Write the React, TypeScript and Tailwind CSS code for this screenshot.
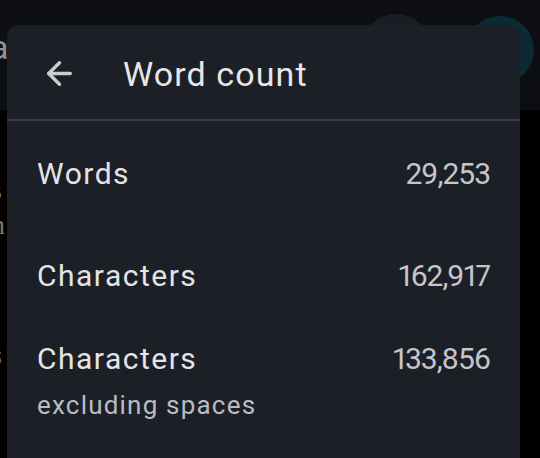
import { ArrowLeft } from "lucide-react";

const rows = [
  { label: "Words", value: "29,253", gap: "mt-[35px]" },
  { label: "Characters", value: "162,917", gap: "mt-[66px]" },
  { label: "Characters", value: "133,856", gap: "mt-[47px]", sub: "excluding spaces" },
];

export default function App() {
  return (
    <div
      className="relative w-[540px] h-[458px] overflow-hidden bg-black"
      style={{ fontFamily: "Roboto, 'Noto Sans', sans-serif" }}
    >
      {/* page behind the sheet */}
      <div className="absolute inset-x-0 top-0 h-[110px] bg-[#0c0e11]" />
      <div className="absolute left-[360px] top-[14px] w-[72px] h-[72px] rounded-full bg-[#1a1e24]" />
      <div className="absolute left-[466px] top-[16px] w-[68px] h-[68px] rounded-full bg-[#0c2a33]" />
      <span className="absolute left-[-10px] top-[30px] text-[34px] leading-none text-[#8e9196]">a</span>
      <span className="absolute left-[-9px] top-[176px] text-[28px] leading-none text-[#8a7458]" style={{ fontFamily: "'Liberation Serif', serif" }}>s</span>
      <span className="absolute left-[-9px] top-[211px] text-[28px] leading-none text-[#8a7458]" style={{ fontFamily: "'Liberation Serif', serif" }}>n</span>
      <span className="absolute left-[-13px] top-[340px] text-[30px] leading-none text-[#6d7075]">s</span>

      {/* word count sheet */}
      <div className="relative ml-[7px] mt-[25px] w-[513px] h-[433px] rounded-t-[12px] bg-[#1c1f26]">
        <div className="flex items-center h-[94px] pt-[3px] pl-[34px]">
          <ArrowLeft size={37} strokeWidth={2.2} className="text-[#c9ccd1]" />
          <span className="ml-[45px] text-[34px] leading-[40px] text-[#e6e6e9] tracking-[1.1px]">Word count</span>
        </div>
        <div className="h-[2px] bg-[#3c4046]" />
        <div className="px-[30px]">
          {rows.map((r, i) => (
            <div key={i} className={r.gap}>
              <div className="flex justify-between items-start">
                <span className="text-[30px] leading-[36px] text-[#e3e4e7] tracking-[1.5px]">{r.label}</span>
                <span className="text-[30px] leading-[36px] text-[#c3c6cc] tracking-[-1px] proportional-nums">{r.value}</span>
              </div>
              {r.sub && (
                <div className="mt-[12px] text-[26px] leading-[32px] text-[#b9bcc2] tracking-[1.2px]">{r.sub}</div>
              )}
            </div>
          ))}
        </div>
      </div>
    </div>
  );
}
